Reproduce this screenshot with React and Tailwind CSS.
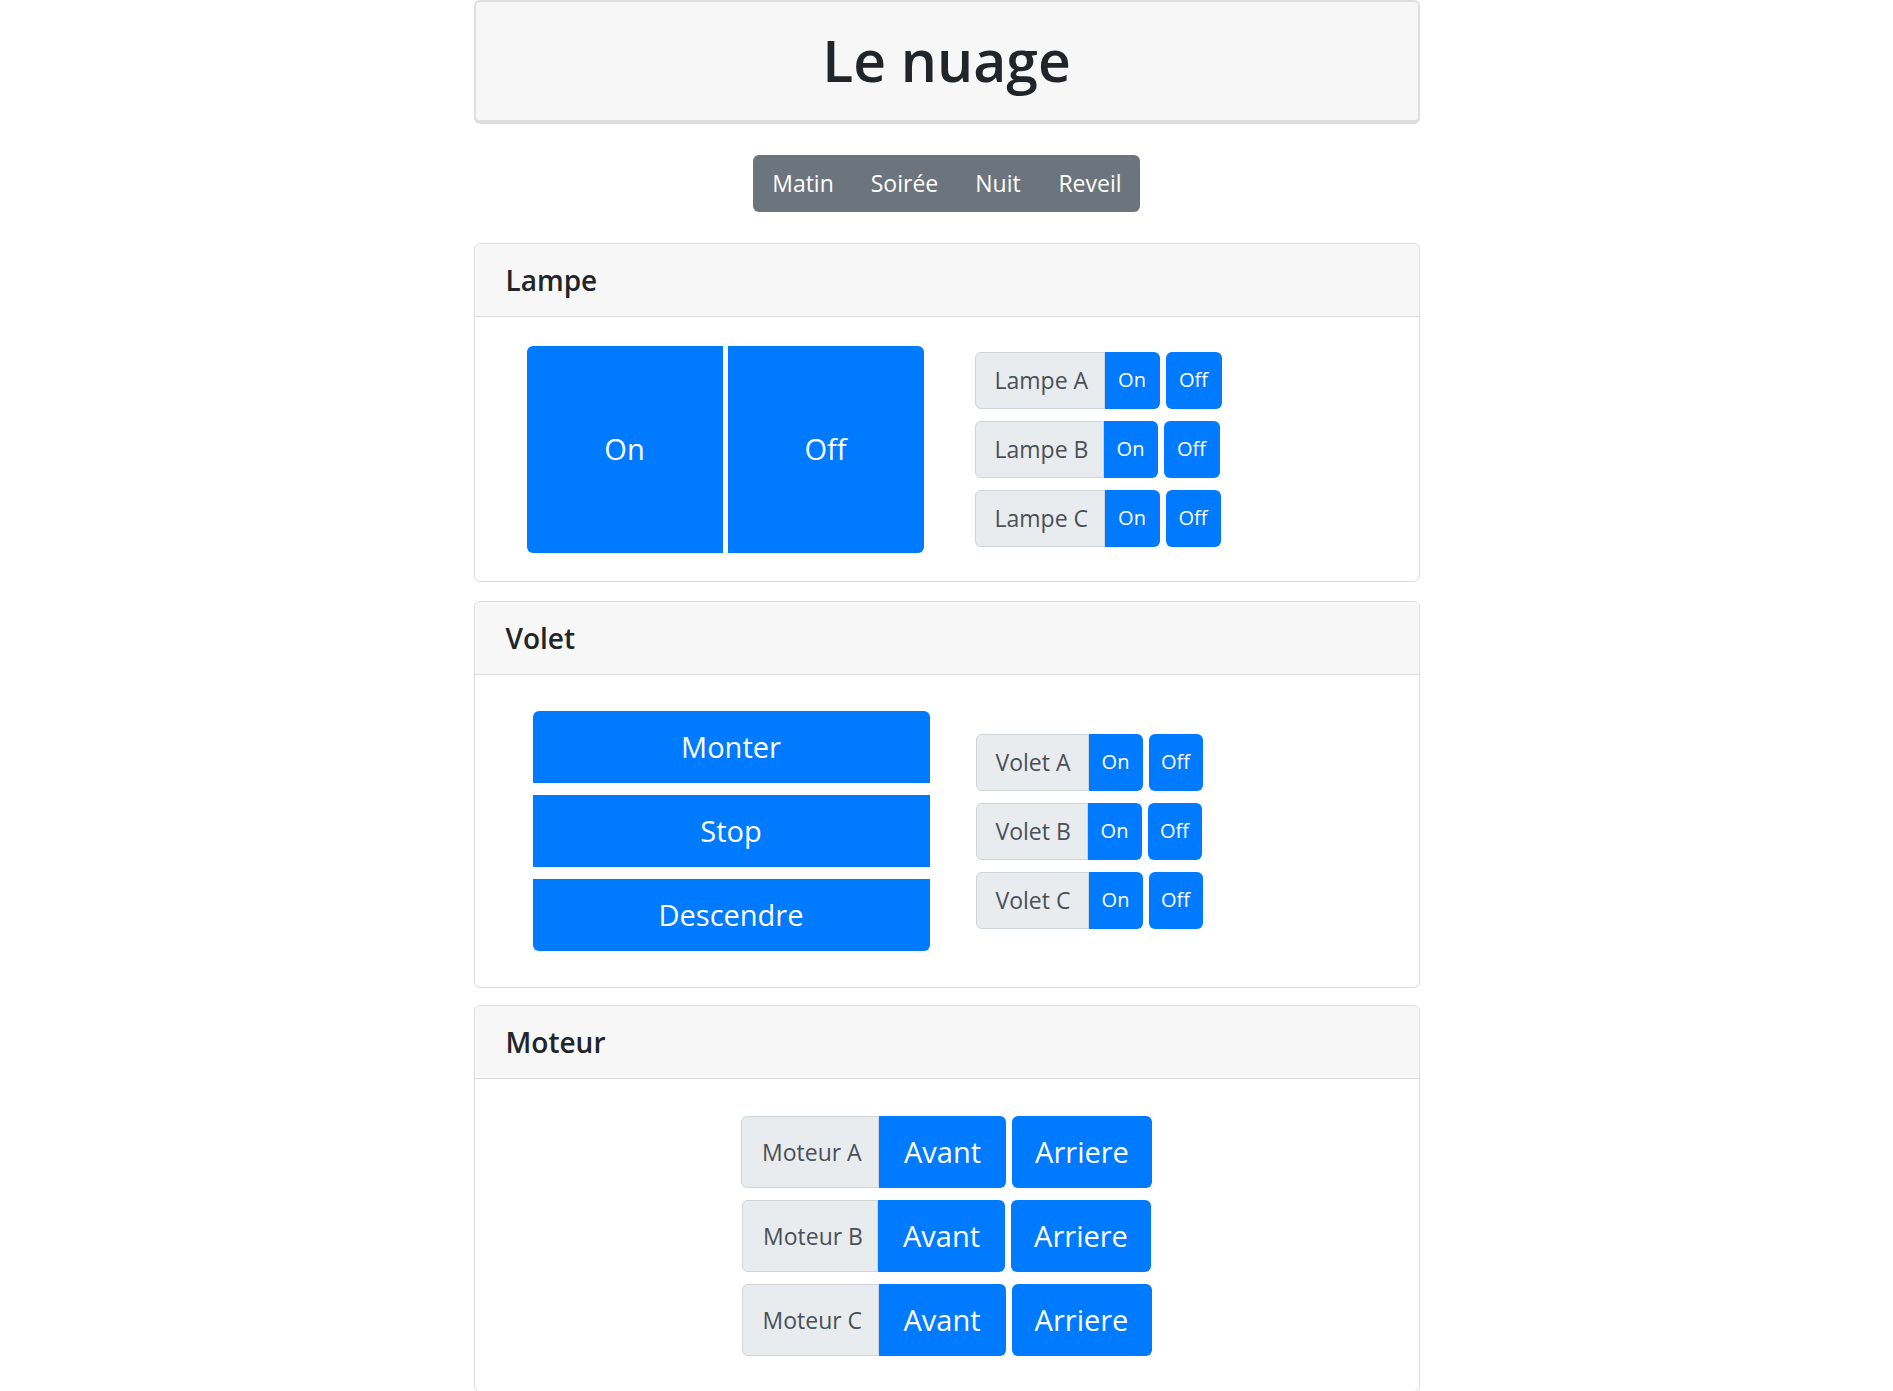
import React from "react";

const lampes = [
  { name: "Lampe A", label: "w-[130px]", on: "w-[55px]", off: "w-[56px]" },
  { name: "Lampe B", label: "w-[129px]", on: "w-[54px]", off: "w-[56px]" },
  { name: "Lampe C", label: "w-[130px]", on: "w-[55px]", off: "w-[55px]" },
];

const volets = [
  { name: "Volet A", label: "w-[113px]", on: "w-[54px]", off: "w-[54px]" },
  { name: "Volet B", label: "w-[112px]", on: "w-[54px]", off: "w-[54px]" },
  { name: "Volet C", label: "w-[113px]", on: "w-[54px]", off: "w-[54px]" },
];

const moteurs = [
  { name: "Moteur A", label: "w-[138px]" },
  { name: "Moteur B", label: "w-[136px]" },
  { name: "Moteur C", label: "w-[137px]" },
];

const scenes = [
  { name: "Matin", w: "w-[100px]" },
  { name: "Soirée", w: "w-[103px]" },
  { name: "Nuit", w: "w-[84px]" },
  { name: "Reveil", w: "w-[100px]" },
];

function Card({ title, className, children }) {
  return (
    <section className={"rounded-[6px] border border-[#dcdcdc] overflow-hidden " + className}>
      <div className="h-[73px] bg-[#f7f7f7] border-b border-[#dcdcdc] pl-[31px] pt-[19px]">
        <h4 className="text-[28px] leading-[34px] font-semibold text-[#212529]">{title}</h4>
      </div>
      {children}
    </section>
  );
}

// ligne "Lampe A | On | Off"
function SwitchRow({ item }) {
  return (
    <div className="flex h-[57px]">
      <div
        className={
          "flex items-center pl-[19px] bg-[#e9ecef] border border-[#ced4da] rounded-l-[6px] text-[23px] text-[#495057] " +
          item.label
        }
      >
        {item.name}
      </div>
      <button className={"bg-[#007bff] text-white text-[20px] rounded-r-[6px] " + item.on}>On</button>
      <button className={"ml-[6px] bg-[#007bff] text-white text-[20px] rounded-[6px] " + item.off}>Off</button>
    </div>
  );
}

export default function App() {
  return (
    <div className="min-h-screen bg-white font-['Open_Sans',sans-serif]">
      <div className="w-[946px] mx-auto">
        {/* Titre */}
        <div className="h-[124px] flex items-center justify-center bg-[#f7f7f7] border-2 border-b-4 border-[#dedede] rounded-[6px]">
          <h1 className="text-[57px] leading-[68px] font-semibold text-[#212529] mt-[-2px]">Le nuage</h1>
        </div>

        {/* Scènes */}
        <div className="mt-[31px] flex justify-center">
          <div className="flex h-[57px] bg-[#6c757d] rounded-[6px] overflow-hidden">
            {scenes.map((s) => (
              <button key={s.name} className={"text-white text-[23px] text-center " + s.w}>
                {s.name}
              </button>
            ))}
          </div>
        </div>

        {/* Lampe */}
        <Card title="Lampe" className="mt-[31px]">
          <div className="h-[264px] flex items-center pl-[52px]">
            <div className="flex gap-[5px]">
              <button className="w-[196px] h-[207px] bg-[#007bff] text-white text-[29px] rounded-l-[6px]">On</button>
              <button className="w-[196px] h-[207px] bg-[#007bff] text-white text-[29px] rounded-r-[6px]">Off</button>
            </div>
            <div className="ml-[51px] flex flex-col gap-[12px]">
              {lampes.map((l) => (
                <SwitchRow key={l.name} item={l} />
              ))}
            </div>
          </div>
        </Card>

        {/* Volet */}
        <Card title="Volet" className="mt-[19px]">
          <div className="h-[312px] flex items-center pl-[58px]">
            <div className="w-[397px] flex flex-col gap-[12px]">
              <button className="h-[72px] bg-[#007bff] text-white text-[29px] rounded-t-[6px]">Monter</button>
              <button className="h-[72px] bg-[#007bff] text-white text-[29px]">Stop</button>
              <button className="h-[72px] bg-[#007bff] text-white text-[29px] rounded-b-[6px]">Descendre</button>
            </div>
            <div className="ml-[46px] flex flex-col gap-[12px]">
              {volets.map((v) => (
                <SwitchRow key={v.name} item={v} />
              ))}
            </div>
          </div>
        </Card>

        {/* Moteur */}
        <Card title="Moteur" className="mt-[17px]">
          <div className="pt-[37px] pb-[35px] flex flex-col items-center gap-[12px]">
            {moteurs.map((m) => (
              <div key={m.name} className="flex h-[72px]">
                <div
                  className={
                    "flex items-center pl-[20px] bg-[#e9ecef] border border-[#ced4da] rounded-l-[6px] text-[23px] text-[#495057] " +
                    m.label
                  }
                >
                  {m.name}
                </div>
                <button className="w-[127px] bg-[#007bff] text-white text-[29px] rounded-r-[6px]">Avant</button>
                <button className="ml-[6px] w-[140px] bg-[#007bff] text-white text-[29px] rounded-[6px]">Arriere</button>
              </div>
            ))}
          </div>
        </Card>
      </div>
    </div>
  );
}
